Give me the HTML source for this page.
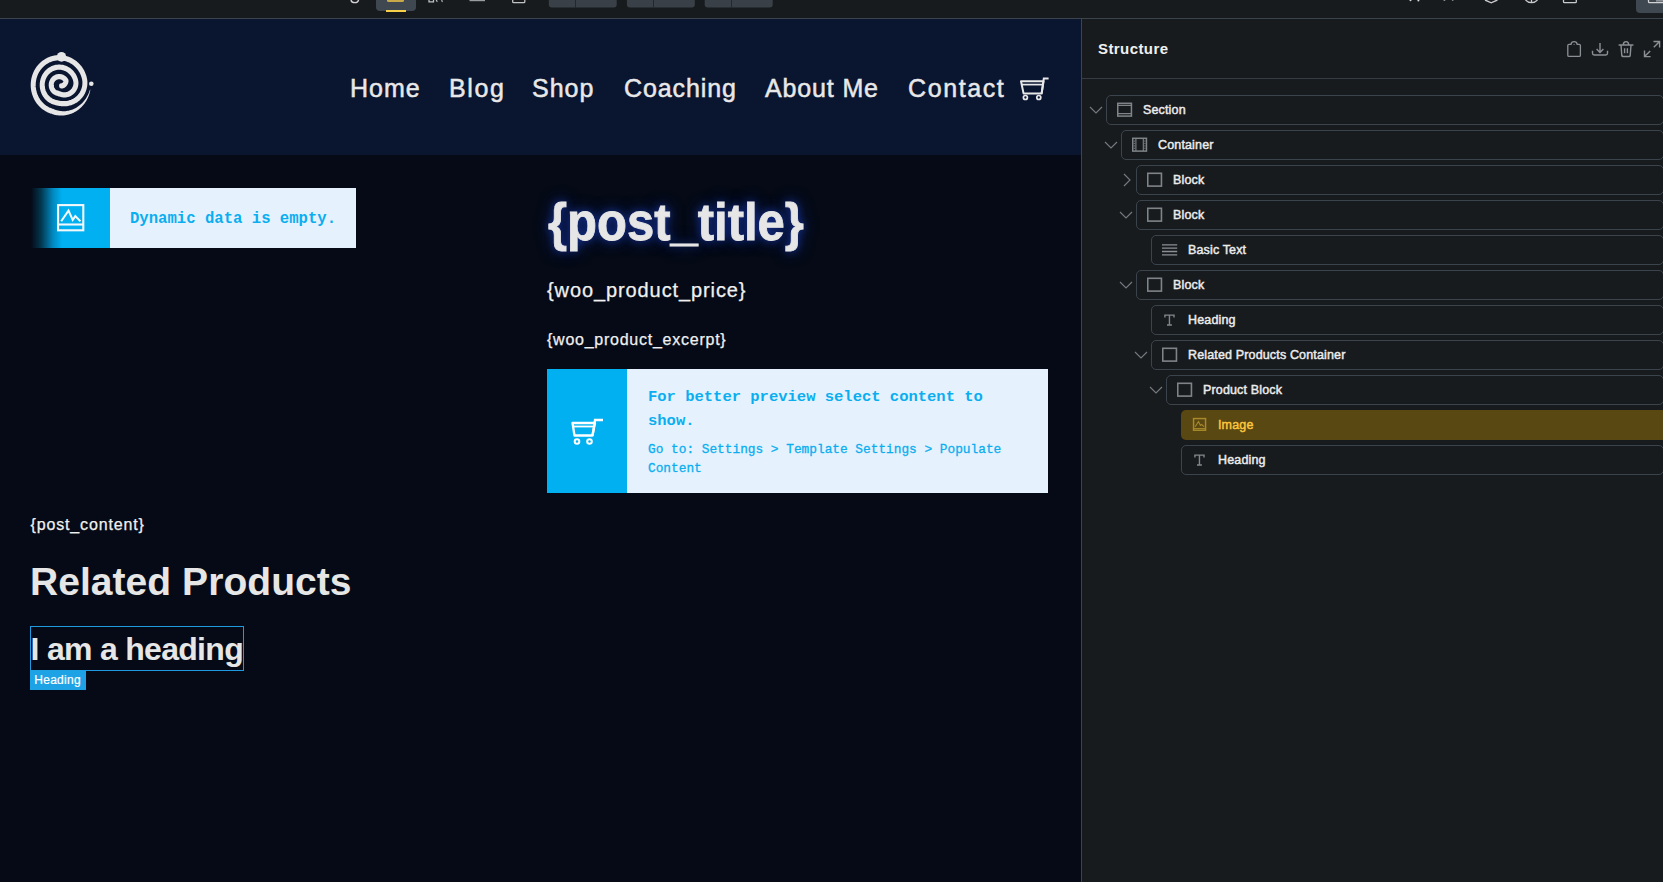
<!DOCTYPE html>
<html><head><meta charset="utf-8">
<style>
*{margin:0;padding:0;box-sizing:border-box}
html,body{width:1663px;height:882px;overflow:hidden;background:#050a16;font-family:"Liberation Sans",sans-serif;}
.abs{position:absolute}
#toolbar{position:absolute;left:0;top:0;width:1663px;height:18px;background:#181b1e}
#tbline{position:absolute;left:0;top:18px;width:1663px;height:1px;background:#3c454d}
#header{position:absolute;left:0;top:19px;width:1081px;height:136px;background:#0a1530}
#content{position:absolute;left:0;top:155px;width:1081px;height:727px;background:#050a16}
#pline{position:absolute;left:1081px;top:19px;width:1px;height:863px;background:#3c454d}
#panel{position:absolute;left:1082px;top:19px;width:581px;height:863px;background:#181b1e}
.nav{position:absolute;top:73px;font-size:25px;color:#e8e8e8;-webkit-text-stroke:0.5px #e8e8e8;line-height:30px;white-space:nowrap}
.txt{position:absolute;white-space:nowrap;color:#ececec}
.mono{font-family:"Liberation Mono",monospace;font-weight:bold;color:#0aaef0}
.row{position:absolute;height:30px;border:1px solid #3b434c;border-radius:5px}
.rl{position:absolute;font-size:12.5px;letter-spacing:0.15px;font-weight:normal;-webkit-text-stroke:0.45px currentColor;color:#eaeaea;white-space:nowrap;line-height:14px;margin-top:1px}
.ico{position:absolute}
</style></head><body>
<div id="toolbar"></div>
<div id="tbline"></div>
<!-- toolbar items -->
<svg class="abs" style="left:0;top:0" width="1663" height="18" viewBox="0 0 1663 18">
<path d="M351,0 Q351.5,2.6 355,2.6 Q358,2.6 358.6,0" fill="none" stroke="#d0d2d4" stroke-width="1.4"/>
<path d="M376,0 H416 V7 Q416,11 412,11 H380 Q376,11 376,7 Z" fill="#3f4750"/>
<path d="M387,0 H404 V0.5 Q404,2 402.5,2 H388.5 Q387,2 387,0.5 Z" fill="#c7a94a"/>
<rect x="386" y="10" width="20" height="2" fill="#f7d04a"/>
<path d="M429,0 V1.8 H433.5 V0" fill="none" stroke="#bfc1c3" stroke-width="1.3"/>
<path d="M436,0 Q437.5,1 436.8,2" fill="none" stroke="#bfc1c3" stroke-width="1.1"/>
<path d="M441.5,0 Q442.5,1 442,2" fill="none" stroke="#bfc1c3" stroke-width="1.1"/>
<rect x="469.5" y="0" width="15.5" height="1.2" fill="#9a9da0"/>
<path d="M512.7,0 V1.7 Q512.7,2.7 513.7,2.7 H523.8 Q524.8,2.7 524.8,1.7 V0" fill="none" stroke="#c0c2c4" stroke-width="1.3"/>
<path d="M548.8,0 H616.7 V4.5 Q616.7,7.5 613.7,7.5 H551.8 Q548.8,7.5 548.8,4.5 Z" fill="#394047"/>
<rect x="575" y="0" width="1" height="7.5" fill="#24282c"/>
<path d="M626.9,0 H694.8 V4.5 Q694.8,7.5 691.8,7.5 H629.9 Q626.9,7.5 626.9,4.5 Z" fill="#394047"/>
<rect x="653" y="0" width="1" height="7.5" fill="#24282c"/>
<path d="M704.7,0 H772.7 V4.5 Q772.7,7.5 769.7,7.5 H707.7 Q704.7,7.5 704.7,4.5 Z" fill="#394047"/>
<rect x="731" y="0" width="1" height="7.5" fill="#24282c"/>
<circle cx="1410.5" cy="0.2" r="1" fill="#d8d8d8"/>
<circle cx="1418.4" cy="0.4" r="1" fill="#d8d8d8"/>
<circle cx="1444.4" cy="0.2" r="0.9" fill="#8a8c8e"/>
<circle cx="1452.7" cy="0" r="0.9" fill="#8a8c8e"/>
<path d="M1485,0 L1491.2,2.8 L1497.4,0" fill="none" stroke="#c8cacc" stroke-width="1.4"/>
<path d="M1525.5,0 Q1528,2.6 1531.5,2.6 Q1535,2.6 1537.5,0 M1531.5,0 V2.5" fill="none" stroke="#c8cacc" stroke-width="1.3"/>
<path d="M1563.5,0 V1.7 Q1563.5,2.6 1564.5,2.6 H1575.3 Q1576.3,2.6 1576.3,1.7 V0" fill="none" stroke="#c8cacc" stroke-width="1.3"/>
<path d="M1636,0 H1663 V13 H1640 Q1636,13 1636,9 Z" fill="#3f4750"/>
<path d="M1648.5,0 V1.7 Q1648.5,2.6 1649.5,2.6 H1663" fill="none" stroke="#d0d2d4" stroke-width="1.3"/>
<rect x="1656" y="0" width="7" height="1.6" fill="#8d9196"/>
</svg>
<div id="header"></div>
<div id="content"></div>
<div id="pline"></div>
<div id="panel"></div>

<!-- logo -->
<svg class="abs" style="left:0;top:0" width="110" height="130" viewBox="0 0 110 130">
<g transform="translate(59.2 85) scale(1 1.05) translate(-59.2 -85)"><path d="M61.55,85.86 L62.03,85.81 L62.51,85.70 L62.98,85.53 L63.45,85.30 L63.90,85.00 L64.33,84.64 L64.73,84.22 L65.09,83.75 L65.41,83.22 L65.68,82.64 L65.91,82.01 L66.07,81.35 L65.98,80.76 L65.67,80.30 L65.33,79.86 L64.95,79.44 L64.55,79.05 L64.13,78.70 L63.67,78.37 L63.20,78.07 L62.71,77.81 L62.20,77.58 L61.67,77.39 L61.14,77.24 L60.59,77.12 L60.04,77.04 L59.48,77.00 L58.92,77.00 L58.36,77.04 L57.81,77.12 L57.26,77.24 L56.73,77.39 L56.20,77.58 L55.69,77.81 L55.20,78.07 L54.73,78.37 L54.27,78.70 L53.85,79.05 L53.45,79.44 L53.07,79.86 L52.73,80.30 L52.42,80.76 L52.14,81.24 L51.89,81.75 L51.68,82.26 L51.51,82.79 L51.37,83.34 L51.28,83.89 L51.22,84.44 L51.20,85.00 L51.22,85.56 L51.28,86.11 L51.37,86.66 L51.51,87.21 L51.68,87.74 L51.89,88.25 L52.14,88.76 L52.42,89.24 L52.73,89.70 L53.07,90.14 L53.45,90.56 L53.85,90.95 L54.27,91.30 L54.73,91.63 L55.20,91.93 L55.69,92.19 L56.20,92.42 L56.73,92.61 L57.26,92.76 L57.80,92.92 L58.35,93.10 L58.91,93.29 L59.50,93.49 L60.11,93.68 L60.76,93.87 L61.46,94.05 L62.19,94.19 L62.96,94.31 L63.77,94.38 L64.62,94.39 L65.51,94.35 L66.41,94.23 L67.34,94.04 L68.27,93.76 L69.21,93.40 L70.13,92.94 L71.02,92.39 L71.88,91.74 L72.69,91.01 L73.44,90.18 L74.11,89.27 L74.69,88.29 L75.18,87.25 L75.55,86.14 L75.81,85.00 L75.95,83.83 L75.95,82.65 L75.81,81.47 L75.54,80.31 L75.17,79.19 L74.73,78.09 L74.21,77.02 L73.62,75.99 L72.95,75.01 L72.22,74.07 L71.43,73.19 L70.58,72.37 L69.67,71.60 L68.71,70.91 L67.70,70.28 L66.65,69.72 L65.57,69.24 L64.45,68.83 L63.31,68.50 L62.15,68.26 L60.98,68.09 L59.79,68.01 L58.61,68.01 L57.42,68.09 L56.25,68.26 L55.09,68.50 L53.95,68.83 L52.83,69.24 L51.75,69.72 L50.70,70.28 L49.69,70.91 L48.73,71.60 L47.82,72.37 L46.97,73.19 L46.18,74.07 L45.45,75.01 L44.78,75.99 L44.19,77.02 L43.67,78.09 L43.23,79.19 L42.86,80.31 L42.57,81.47 L42.37,82.63 L42.24,83.81 L42.20,85.00 L42.24,86.19 L42.37,87.37 L42.57,88.53 L42.86,89.69 L43.23,90.81 L43.67,91.91 L44.19,92.98 L44.78,94.01 L45.45,94.99 L46.18,95.93 L46.97,96.81 L47.82,97.63 L48.73,98.40 L49.69,99.09 L50.70,99.72 L51.75,100.28 L52.83,100.76 L53.95,101.17 L55.09,101.50 L56.24,101.79 L57.41,102.05 L58.60,102.28 L59.81,102.48 L61.05,102.63 L62.33,102.74 L63.63,102.78 L64.97,102.75 L66.33,102.65 L67.72,102.47 L69.12,102.19 L70.54,101.81 L71.95,101.32 L73.36,100.73 L74.75,100.01 L76.10,99.18 L77.41,98.23 L78.65,97.16 L79.83,95.97 L80.91,94.67 L81.89,93.26 L82.76,91.76 L83.50,90.16 L84.09,88.50 L84.53,86.77 L84.81,85.00 L84.92,83.20 L84.86,81.39 L84.62,79.60 L84.19,77.83 L83.63,76.11 L82.95,74.42 L82.16,72.79 L81.25,71.22 L80.23,69.72 L79.12,68.29 L77.90,66.94 L76.60,65.68 L75.21,64.51 L73.74,63.45 L72.20,62.48 L70.60,61.63 L68.94,60.89 L67.23,60.27 L65.49,59.77 L63.71,59.39 L61.92,59.14 L60.11,59.02 L58.29,59.02 L56.48,59.14 L54.69,59.39 L52.91,59.77 L51.17,60.27 L49.46,60.89 L47.80,61.63 L46.20,62.48 L44.66,63.45 L43.19,64.51 L41.80,65.68 L40.50,66.94 L39.28,68.29 L38.17,69.72 L37.15,71.22 L36.24,72.79 L35.45,74.42 L34.77,76.11 L34.21,77.83 L33.77,79.59 L33.45,81.38 L33.26,83.19 L33.20,85.00 L33.26,86.81 L33.45,88.62 L33.77,90.41 L34.21,92.17 L34.77,93.89 L35.45,95.58 L36.24,97.21 L37.15,98.78 L38.17,100.28 L39.28,101.71 L40.50,103.06 L41.80,104.32 L43.19,105.49 L44.66,106.55 L46.20,107.52 L47.80,108.37 L49.46,109.11 L51.17,109.73" fill="none" stroke="#e6e6e6" stroke-width="5" stroke-linecap="round" stroke-linejoin="round"/>
<path d="M51.82,112.53 L52.98,112.90 L54.15,113.22 L55.33,113.50 L56.54,113.72 L57.75,113.89 L58.97,114.01 L60.20,114.08 L61.44,114.10 L62.68,114.06 L63.92,113.97 L65.16,113.82 L66.39,113.63 L67.62,113.37 L68.84,113.07 L70.05,112.71 L71.24,112.30 L72.42,111.84 L73.58,111.33 L74.73,110.76 L75.85,110.15 L76.94,109.49 L78.01,108.78 L79.05,108.02 L80.06,107.21 L81.03,106.36 L81.97,105.47 L82.88,104.54 L83.74,103.56 L84.56,102.55 L85.34,101.50 L86.08,100.41 L86.77,99.29 L87.41,98.14 L88.00,96.96 L88.53,95.75 L89.02,94.52 L89.45,93.26 L89.82,91.98 L90.13,90.69 L90.34,89.38 L90.05,89.34 L89.58,90.59 L89.10,91.82 L88.57,93.02 L88.01,94.19 L87.40,95.33 L86.75,96.44 L86.06,97.51 L85.33,98.54 L84.56,99.54 L83.76,100.49 L82.92,101.41 L82.05,102.28 L81.15,103.11 L80.22,103.90 L79.27,104.64 L78.29,105.33 L77.29,105.98 L76.27,106.58 L75.23,107.13 L74.18,107.63 L73.11,108.09 L72.03,108.49 L70.95,108.85 L69.85,109.15 L68.75,109.41 L67.65,109.62 L66.55,109.78 L65.45,109.89 L64.36,109.96 L63.27,109.97 L62.19,109.94 L61.11,109.87 L60.05,109.74 L59.01,109.58 L57.98,109.37 L56.96,109.11 L55.97,108.82 L55.00,108.48 L54.04,108.11 L53.12,107.70Z" fill="#e6e6e6"/></g>
<ellipse cx="61.5" cy="56.8" rx="4.6" ry="4.9" fill="#e6e6e6"/>
<circle cx="91.3" cy="83.8" r="2.3" fill="#e6e6e6"/>
</svg>

<div class="nav" style="left:350px;letter-spacing:1.0px">Home</div>
<div class="nav" style="left:449px;letter-spacing:1.6px">Blog</div>
<div class="nav" style="left:532px;letter-spacing:1.0px">Shop</div>
<div class="nav" style="left:624px;letter-spacing:0.9px">Coaching</div>
<div class="nav" style="left:765px;letter-spacing:0.85px">About Me</div>
<div class="nav" style="left:908px;letter-spacing:1.6px">Contact</div>


<!-- cart nav -->
<svg class="abs" style="left:1015px;top:74px" width="36" height="28" viewBox="0 0 36 28">
<path d="M6,7.3 L28.5,7.3 L26.6,19.6 L8.6,19.6 Z" fill="none" stroke="#e8e8e8" stroke-width="2" stroke-linejoin="round"/>
<path d="M6.6,10.6 L28,10.6" stroke="#e8e8e8" stroke-width="1.7"/>
<path d="M26.6,19.6 L28.8,4.6 L33.6,4.6" fill="none" stroke="#e8e8e8" stroke-width="2"/>
<circle cx="10.4" cy="23.5" r="2" fill="none" stroke="#e8e8e8" stroke-width="1.7"/>
<circle cx="23.8" cy="23.5" r="2" fill="none" stroke="#e8e8e8" stroke-width="1.7"/>
</svg>

<!-- image placeholder box -->
<div class="abs" style="left:31px;top:188px;width:325px;height:60px;background:#e5f2fd"></div>
<div class="abs" style="left:31px;top:188px;width:79px;height:60px;background:linear-gradient(to right,#050a16 0px,#02374f 10px,#0189c0 22px,#00b0f0 31px,#00b0f0 79px)"></div>
<svg class="abs" style="left:57px;top:204px" width="28" height="28" viewBox="0 0 28 28">
<rect x="1.1" y="1.1" width="25.2" height="25.2" fill="none" stroke="#f4f8fb" stroke-width="2.1"/>
<path d="M1.5,20.5 L26,20.5" stroke="#f4f8fb" stroke-width="2.1"/>
<path d="M4.2,17.2 L11.5,6.6 L15.7,16 L18.3,12.1 L23.4,17.2" fill="none" stroke="#f4f8fb" stroke-width="2"/>
</svg>
<div class="txt mono" style="left:130px;top:209.5px;font-size:15.62px;line-height:18px">Dynamic data is empty.</div>

<!-- post title -->
<div class="txt" style="left:548px;top:193px;transform:scaleY(1.05);transform-origin:0 47px;font-size:49px;font-weight:bold;line-height:60px;color:#e6e6e6;-webkit-text-stroke:0.8px #e6e6e6;text-shadow:0 0 8px #18349a,0 0 16px #0d2470">{post_title}</div>
<div class="txt" style="left:547px;top:278px;font-size:20px;line-height:24px;color:#f0f0f0;letter-spacing:0.9px;-webkit-text-stroke:0.25px #f0f0f0">{woo_product_price}</div>
<div class="txt" style="left:547px;top:330px;font-size:16px;line-height:20px;color:#f0f0f0;letter-spacing:0.75px;-webkit-text-stroke:0.25px #f0f0f0">{woo_product_excerpt}</div>

<!-- populate box -->
<div class="abs" style="left:547px;top:369px;width:501px;height:124px;background:#e5f2fd"></div>
<div class="abs" style="left:547px;top:369px;width:80px;height:124px;background:#00b0f0"></div>
<svg class="abs" style="left:570px;top:418px" width="36" height="30" viewBox="0 0 36 30">
<path d="M2.5,5 L25,5 L22.5,17.5 L4.5,17.5 Z" fill="none" stroke="#ffffff" stroke-width="2.3" stroke-linejoin="round"/>
<path d="M3.5,8.5 L24.3,8.5" stroke="#ffffff" stroke-width="1.8"/>
<path d="M22.5,17.5 L25,2 L33,2" fill="none" stroke="#ffffff" stroke-width="2.3"/>
<circle cx="7" cy="23.5" r="2.3" fill="none" stroke="#ffffff" stroke-width="2"/>
<circle cx="19.5" cy="23.5" r="2.3" fill="none" stroke="#ffffff" stroke-width="2"/>
</svg>
<div class="txt mono" style="left:648px;top:385.2px;font-size:15.5px;line-height:24px">For better preview select content to<br>show.</div>
<div class="txt mono" style="left:648px;top:439.7px;font-size:12.8px;line-height:19px;font-weight:normal;-webkit-text-stroke:0.3px #0aaef0">Go to: Settings &gt; Template Settings &gt; Populate<br>Content</div>

<!-- post content -->
<div class="txt" style="left:30.5px;top:515px;font-size:16px;line-height:20px;color:#f0f0f0;letter-spacing:0.85px;-webkit-text-stroke:0.25px #f0f0f0">{post_content}</div>
<div class="txt" style="left:30px;top:560px;letter-spacing:0.05px;font-size:39px;line-height:44px;font-weight:bold;color:#e6e6e6">Related Products</div>
<div class="abs" style="left:30px;top:626px;width:214px;height:45px;border:1px solid #1e9be0"></div>
<div class="txt" style="left:30.5px;top:629.5px;letter-spacing:-0.7px;font-size:32px;line-height:38px;font-weight:bold;color:#e6e6e6">I am a heading</div>
<div class="abs" style="left:30px;top:670px;width:56px;height:20px;background:#1ea2e6"></div>
<div class="txt" style="left:34.2px;top:673px;font-size:12px;line-height:14px;color:#fff;letter-spacing:0.3px;-webkit-text-stroke:0.2px #fff">Heading</div>

<!-- panel header -->
<div class="txt" style="left:1098px;top:40px;font-size:15px;line-height:18px;font-weight:bold;color:#f0f0f0;letter-spacing:0.42px">Structure</div>
<div class="abs" style="left:1082px;top:78px;width:581px;height:1px;background:#363c43"></div>
<svg class="abs" style="left:1564px;top:38px" width="100" height="22" viewBox="0 0 100 22">
<path d="M5,6.3 Q3.8,6.3 3.8,7.5 V17.2 Q3.8,18.4 5,18.4 H15.2 Q16.4,18.4 16.4,17.2 V7.5 Q16.4,6.3 15.2,6.3 H13.2 Q12.8,3.6 10.1,3.6 Q7.4,3.6 7,6.3 Z" fill="none" stroke="#8b9095" stroke-width="1.3"/>
<path d="M10.1,6.2 V7" stroke="#8b9095" stroke-width="1.1"/>
<path d="M36,5 V14.2 M32.6,11 L36,14.4 L39.4,11" fill="none" stroke="#8b9095" stroke-width="1.4"/>
<path d="M28.5,12.8 V15.3 Q28.5,17 30.2,17 H41.8 Q43.5,17 43.5,15.3 V12.8" fill="none" stroke="#8b9095" stroke-width="1.4"/>
<path d="M54.6,7 H69.4 M57,7 L57.8,17.5 Q58,18.5 59,18.5 H65 Q66,18.5 66.2,17.5 L67,7 M59.3,7 Q59.3,3.6 62,3.6 Q64.7,3.6 64.7,7 M60.6,10.3 V15.2 M63.4,10.3 V15.2" fill="none" stroke="#8b9095" stroke-width="1.4"/>
<path d="M80.5,18.6 L86.2,12.9 M89.8,9.3 L95.6,3.5 M89.5,3.5 H95.6 V9.6 M80.5,12.5 V18.6 H86.6" fill="none" stroke="#8b9095" stroke-width="1.4"/>
</svg>
<div class="row" style="left:1106px;top:95px;width:558px"></div>
<svg class="abs" style="left:1089px;top:105px" width="14" height="10" viewBox="0 0 14 10"><path d="M1,2 L7,8 L13,2" fill="none" stroke="#747a7f" stroke-width="1.15"/></svg>
<div class="ico" style="left:1117px;top:102px"><svg width="16" height="15" viewBox="0 0 16 15"><rect x="0.75" y="1.3" width="13.7" height="12.8" fill="none" stroke="#7f8488" stroke-width="1.5"/><path d="M0.8,3.3H14.4M0.8,11.6H14.4" stroke="#7f8488" stroke-width="1.2"/></svg></div>
<div class="rl" style="left:1143px;top:102px;color:#ececec">Section</div>
<div class="row" style="left:1121px;top:130px;width:543px"></div>
<svg class="abs" style="left:1104px;top:140px" width="14" height="10" viewBox="0 0 14 10"><path d="M1,2 L7,8 L13,2" fill="none" stroke="#747a7f" stroke-width="1.15"/></svg>
<div class="ico" style="left:1132px;top:137px"><svg width="16" height="15" viewBox="0 0 16 15"><rect x="0.75" y="1.3" width="13.7" height="12.8" fill="none" stroke="#7f8488" stroke-width="1.5"/><path d="M3.9,1.3V14.1M11.3,1.3V14.1" stroke="#7f8488" stroke-width="1.1"/><path d="M2.3,3.5V12.5M12.9,3.5V12.5" stroke="#7f8488" stroke-width="1" stroke-dasharray="1.2,1.2"/></svg></div>
<div class="rl" style="left:1158px;top:137px;color:#ececec">Container</div>
<div class="row" style="left:1136px;top:165px;width:528px"></div>
<svg class="abs" style="left:1122px;top:173px" width="10" height="14" viewBox="0 0 10 14"><path d="M2,1 L8,7 L2,13" fill="none" stroke="#747a7f" stroke-width="1.15"/></svg>
<div class="ico" style="left:1147px;top:172px"><svg width="16" height="15" viewBox="0 0 16 15"><rect x="0.75" y="1.3" width="13.7" height="12.8" fill="none" stroke="#7f8488" stroke-width="1.6"/></svg></div>
<div class="rl" style="left:1173px;top:172px;color:#ececec">Block</div>
<div class="row" style="left:1136px;top:200px;width:528px"></div>
<svg class="abs" style="left:1119px;top:210px" width="14" height="10" viewBox="0 0 14 10"><path d="M1,2 L7,8 L13,2" fill="none" stroke="#747a7f" stroke-width="1.15"/></svg>
<div class="ico" style="left:1147px;top:207px"><svg width="16" height="15" viewBox="0 0 16 15"><rect x="0.75" y="1.3" width="13.7" height="12.8" fill="none" stroke="#7f8488" stroke-width="1.6"/></svg></div>
<div class="rl" style="left:1173px;top:207px;color:#ececec">Block</div>
<div class="row" style="left:1151px;top:235px;width:513px"></div>
<div class="ico" style="left:1162px;top:242px"><svg width="16" height="15" viewBox="0 0 16 15"><path d="M0,2.9H15.2M0,6.2H15.2M0,9.5H15.2M0,12.8H15.2" stroke="#8b9095" stroke-width="1.3"/></svg></div>
<div class="rl" style="left:1188px;top:242px;color:#ececec">Basic Text</div>
<div class="row" style="left:1136px;top:270px;width:528px"></div>
<svg class="abs" style="left:1119px;top:280px" width="14" height="10" viewBox="0 0 14 10"><path d="M1,2 L7,8 L13,2" fill="none" stroke="#747a7f" stroke-width="1.15"/></svg>
<div class="ico" style="left:1147px;top:277px"><svg width="16" height="15" viewBox="0 0 16 15"><rect x="0.75" y="1.3" width="13.7" height="12.8" fill="none" stroke="#7f8488" stroke-width="1.6"/></svg></div>
<div class="rl" style="left:1173px;top:277px;color:#ececec">Block</div>
<div class="row" style="left:1151px;top:305px;width:513px"></div>
<div class="ico" style="left:1162px;top:312px"><svg width="16" height="15" viewBox="0 0 16 15"><path d="M2.2,3.1H12.7M7.45,3.1V13M5,13H9.9M2.9,3.1V5.6M12,3.1V5.6" stroke="#83878b" stroke-width="1.4" fill="none"/></svg></div>
<div class="rl" style="left:1188px;top:312px;color:#ececec">Heading</div>
<div class="row" style="left:1151px;top:340px;width:513px"></div>
<svg class="abs" style="left:1134px;top:350px" width="14" height="10" viewBox="0 0 14 10"><path d="M1,2 L7,8 L13,2" fill="none" stroke="#747a7f" stroke-width="1.15"/></svg>
<div class="ico" style="left:1162px;top:347px"><svg width="16" height="15" viewBox="0 0 16 15"><rect x="0.75" y="1.3" width="13.7" height="12.8" fill="none" stroke="#7f8488" stroke-width="1.6"/></svg></div>
<div class="rl" style="left:1188px;top:347px;color:#ececec">Related Products Container</div>
<div class="row" style="left:1166px;top:375px;width:498px"></div>
<svg class="abs" style="left:1149px;top:385px" width="14" height="10" viewBox="0 0 14 10"><path d="M1,2 L7,8 L13,2" fill="none" stroke="#747a7f" stroke-width="1.15"/></svg>
<div class="ico" style="left:1177px;top:382px"><svg width="16" height="15" viewBox="0 0 16 15"><rect x="0.75" y="1.3" width="13.7" height="12.8" fill="none" stroke="#7f8488" stroke-width="1.6"/></svg></div>
<div class="rl" style="left:1203px;top:382px;color:#ececec">Product Block</div>
<div class="abs" style="left:1181px;top:410px;width:482px;height:30px;background:#5a4812;border-radius:5px 0 0 5px"></div>
<div class="ico" style="left:1192px;top:417px"><svg width="16" height="15" viewBox="0 0 16 15"><rect x="1.55" y="1.55" width="12" height="11.7" fill="none" stroke="#a88a2c" stroke-width="1.45"/><path d="M1.5,11.6H13.6" stroke="#a88a2c" stroke-width="1.1"/><path d="M3.1,9.8L6.5,4.5L8.4,8.4L9.6,7.4L12,9.6" stroke="#a88a2c" stroke-width="1.1" fill="none"/></svg></div>
<div class="rl" style="left:1218px;top:417px;color:#fcc73c">Image</div>
<div class="row" style="left:1181px;top:445px;width:483px"></div>
<div class="ico" style="left:1192px;top:452px"><svg width="16" height="15" viewBox="0 0 16 15"><path d="M2.2,3.1H12.7M7.45,3.1V13M5,13H9.9M2.9,3.1V5.6M12,3.1V5.6" stroke="#83878b" stroke-width="1.4" fill="none"/></svg></div>
<div class="rl" style="left:1218px;top:452px;color:#ececec">Heading</div>
</body></html>
